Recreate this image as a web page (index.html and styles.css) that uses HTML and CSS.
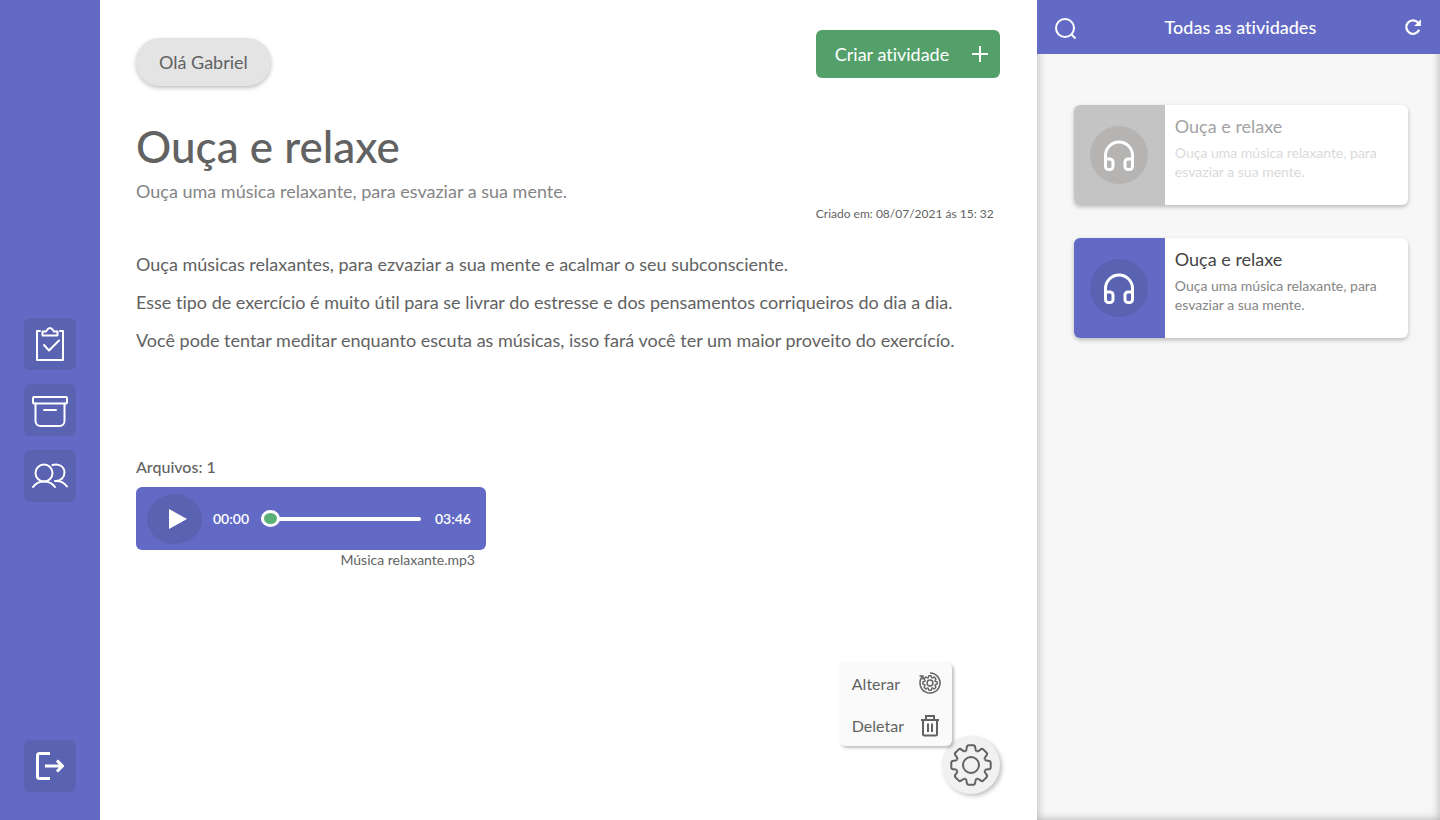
FILE: index.html
```html
<!DOCTYPE html>
<html lang="pt-BR">
<head>
<meta charset="utf-8">
<meta name="viewport" content="width=device-width, initial-scale=1">
<title>Todas as atividades</title>
<link rel="stylesheet" href="styles.css">
</head>
<body>
<svg class="defs" aria-hidden="true">
  <symbol id="gear" viewBox="-22 -22 44 44">
    <g id="gear-half">
      <path id="tooth" d="M-5.7-13.8C-4.7-14.2-4.4-15-4.3-17C-4.2-19-3.6-19.7-2.4-19.7H2.4C3.6-19.7 4.2-19 4.3-17C4.4-15 4.7-14.2 5.7-13.8"/>
      <use href="#tooth" transform="rotate(45)"/>
      <use href="#tooth" transform="rotate(90)"/>
      <use href="#tooth" transform="rotate(135)"/>
    </g>
    <use href="#gear-half" transform="rotate(180)"/>
    <circle r="8"/>
  </symbol>
  <symbol id="headphones" viewBox="0 0 32 32">
    <path d="M2.500 22V16.500a13.500 13.500 0 0 1 27 0V22M2.500 20H7a3 3 0 0 1 3 3v4.500a3 3 0 0 1-3 3H5.500a3 3 0 0 1-3-3ZM29.500 20H25a3 3 0 0 0-3 3v4.500a3 3 0 0 0 3 3h1.500a3 3 0 0 0 3-3Z"/>
  </symbol>
</svg>
<div class="app">
  <aside class="sidebar">
    <nav class="sidebar-nav" aria-label="Principal">
      <a class="nav-button" href="#atividades" aria-label="Atividades">
        <svg class="icon nav-icon" viewBox="0 0 36 36"><path d="M8 5H5v29h26V5h-3M10.500 5.500h3.500c1-.5 1-3.500 4-3.500s3 3 4 3.500h3.500V9.500h-15ZM12 19l5 5.500L27 14.500"/></svg>
      </a>
      <a class="nav-button" href="#arquivo" aria-label="Arquivo">
        <svg class="icon nav-icon" viewBox="0 0 36 36"><rect x="1" y="5" width="34" height="6.500" rx="1"/><path d="M3.500 11.500V29a5 5 0 0 0 5 5h19a5 5 0 0 0 5-5V11.500M12 18h12"/></svg>
      </a>
      <a class="nav-button" href="#pacientes" aria-label="Pacientes">
        <svg class="icon nav-icon" viewBox="0 0 36 36"><circle cx="12" cy="15" r="8.500"/><path d="M1 29c5-7.500 17-7.500 22 0M20.500 7c6-2 12 1.500 12 7.500 0 5-4 9-9.500 8.500M23 23c5-.5 9.500 2 12 5.500"/></svg>
      </a>
    </nav>
    <button class="nav-button logout" type="button" aria-label="Sair">
      <svg class="icon nav-icon logout-icon" viewBox="0 0 36 36"><path d="M18 5.500H7.500a2 2 0 0 0-2 2v21a2 2 0 0 0 2 2H18M13 18h17M25 12.500l5.500 5.500-5.500 5.500"/></svg>
    </button>
  </aside>

  <main class="content">
    <header class="content-top">
      <div class="greeting">Olá Gabriel</div>
      <button class="create" type="button">Criar atividade
        <svg class="icon create-icon" viewBox="0 0 16 16"><path d="M8 0v16M0 8h16"/></svg>
      </button>
    </header>
    <h1 class="title">Ouça e relaxe</h1>
    <p class="subtitle">Ouça uma música relaxante, para esvaziar a sua mente.</p>
    <div class="created-row"><p class="created">Criado em: 08/07/2021 ás 15: 32</p></div>
    <div class="description">
      <p>Ouça músicas relaxantes, para ezvaziar a sua mente e acalmar o seu subconsciente.</p>
      <p>Esse tipo de exercício é muito útil para se livrar do estresse e dos pensamentos corriqueiros do dia a dia.</p>
      <p>Você pode tentar meditar enquanto escuta as músicas, isso fará você ter um maior proveito do exercícío.</p>
    </div>
    <section class="files">
      <h2 class="files-title">Arquivos: 1</h2>
      <div class="player">
        <button class="play" type="button" aria-label="Reproduzir">
          <svg class="play-icon" viewBox="0 0 18 20"><path d="M0 0L18 10L0 20Z"/></svg>
        </button>
        <span class="time">00:00</span>
        <input class="seek" type="range" min="0" max="226" value="0" aria-label="Posição da música">
        <span class="time">03:46</span>
      </div>
      <p class="file-name">Música relaxante.mp3</p>
    </section>
    <div class="settings">
      <button class="settings-button" type="button" aria-label="Opções">
        <svg class="icon settings-icon"><use href="#gear"/></svg>
      </button>
      <div class="menu">
        <button class="menu-item" type="button">Alterar
          <svg class="icon menu-icon" viewBox="0 0 24 24"><path d="M12 2A10 10 0 1 1 4 6M1.500 5H5V8.500"/><svg class="small-gear" x="4" y="4" width="16" height="16"><use href="#gear"/></svg></svg>
        </button>
        <button class="menu-item" type="button">Deletar
          <svg class="icon menu-icon trash-icon" viewBox="0 0 24 24"><path d="M3 7h18M8 7V3h8v4M5 7v14a1.500 1.500 0 0 0 1.500 1.500h11A1.500 1.500 0 0 0 19 21V7M10 10.500v8.500M14 10.500v8.500"/></svg>
        </button>
      </div>
    </div>
  </main>

  <aside class="activities">
    <header class="activities-top">
      <button class="bar-button" type="button" aria-label="Pesquisar">
        <svg class="icon search-icon" viewBox="0 0 22 26"><circle cx="10" cy="14" r="9"/><path d="M16.500 20.500l4 4"/></svg>
      </button>
      <h2 class="activities-title">Todas as atividades</h2>
      <button class="bar-button refresh" type="button" aria-label="Atualizar">
        <svg class="icon refresh-icon" viewBox="0 0 16 16"><path d="M13.500 10.500A6 6 0 1 1 12.500 4"/><path class="refresh-tip" d="M15 1v6H9Z"/></svg>
      </button>
    </header>
    <ul class="cards">
      <li>
        <a class="card card-done" href="#atividade-1">
          <span class="card-side"><span class="card-disc"><svg class="icon card-icon"><use href="#headphones"/></svg></span></span>
          <span class="card-body">
            <span class="card-title">Ouça e relaxe</span>
            <span class="card-text">Ouça uma música relaxante, para esvaziar a sua mente.</span>
          </span>
        </a>
      </li>
      <li>
        <a class="card" href="#atividade-2">
          <span class="card-side"><span class="card-disc"><svg class="icon card-icon"><use href="#headphones"/></svg></span></span>
          <span class="card-body">
            <span class="card-title">Ouça e relaxe</span>
            <span class="card-text">Ouça uma música relaxante, para esvaziar a sua mente.</span>
          </span>
        </a>
      </li>
    </ul>
  </aside>
</div>
</body>
</html>
```
FILE: styles.css
```css
* { box-sizing: border-box; }
body, h1, h2, p, ul { margin: 0; padding: 0; }
body {
  font-family: Lato, "Open Sans", sans-serif;
  font-size: 18px;
  font-weight: 400;
  font-variant-ligatures: none;
  color: #626262;
  background: #fff;
}
button { font: inherit; font-variant-ligatures: none; color: inherit; border: 0; padding: 0; background: none; cursor: pointer; }
a { color: inherit; text-decoration: none; }
.defs { position: absolute; width: 0; height: 0; }
.icon { fill: none; stroke: currentColor; stroke-width: 2; flex: none; }

.app {
  display: grid;
  grid-template-columns: 100px minmax(0, 1fr) minmax(300px, 28%);
  min-height: 100vh;
}

/* Sidebar */
.sidebar {
  display: grid;
  grid-template-rows: 1fr auto 1fr;
  justify-items: center;
  background: #626ac5;
  color: #fff;
}
.sidebar-nav { grid-row: 2; display: grid; gap: 14px; }
.nav-button {
  display: flex;
  align-items: center;
  justify-content: center;
  width: 52px;
  height: 52px;
  border-radius: 6px;
  background: #5a62b2;
}
.nav-icon { width: 36px; height: 36px; stroke-linecap: round; stroke-linejoin: round; }
.logout { grid-row: 3; align-self: end; margin-bottom: 28px; }
.logout-icon { stroke-width: 3; stroke-linecap: butt; }

/* Activity detail */
.content { position: relative; padding: 30px 37px 120px 36px; }
.content-top { display: flex; justify-content: space-between; align-items: flex-start; }
.greeting {
  margin-top: 8px;
  padding: 0 23px;
  line-height: 48px;
  border-radius: 24px;
  background: #e4e4e4;
  box-shadow: 0 2px 4px rgba(0, 0, 0, .25);
}
.create {
  display: flex;
  align-items: center;
  justify-content: space-between;
  width: 184px;
  height: 48px;
  padding: 0 12px 0 19px;
  border-radius: 6px;
  background: #53a06a;
  color: #fff;
}
.create-icon { width: 16px; height: 16px; }
.title { margin-top: 32px; font-size: 44px; font-weight: 500; line-height: 56px; }
.subtitle { margin-top: 4px; line-height: 26px; color: #858585; }
.created-row { display: flex; justify-content: flex-end; }
.created { width: 184px; font-size: 12px; line-height: 20px; white-space: nowrap; }
.description { margin-top: 21px; line-height: 38px; }
.files { width: 350px; margin-top: 96px; }
.files-title { font-size: 16px; font-weight: 500; line-height: 24px; }
.player {
  display: flex;
  align-items: center;
  height: 63px;
  margin-top: 8px;
  padding: 0 15px 0 11px;
  border-radius: 6px;
  background: #626ac5;
  color: #fff;
}
.play {
  display: flex;
  align-items: center;
  justify-content: center;
  flex: none;
  width: 55px;
  height: 50px;
  margin-right: 11px;
  padding-left: 6px;
  border-radius: 50%;
  background: #5a62b2;
}
.play-icon { width: 18px; height: 20px; fill: #fff; }
.time { font-size: 14px; font-weight: 600; }
.seek {
  appearance: none;
  flex: 1;
  min-width: 0;
  height: 18px;
  margin: 0 14px 0 12px;
  background: none;
}
.seek::-webkit-slider-runnable-track { height: 4px; border-radius: 2px; background: #fff; }
.seek::-webkit-slider-thumb {
  appearance: none;
  width: 19px;
  height: 17px;
  margin-top: -7px;
  border: 3px solid #fff;
  border-radius: 50%;
  background: #5bb075;
}
.file-name { padding-right: 11px; font-size: 14px; line-height: 20px; text-align: right; }

/* Floating options */
.settings { position: absolute; right: 37px; bottom: 26px; }
.settings-button {
  display: flex;
  align-items: center;
  justify-content: center;
  width: 58px;
  height: 58px;
  border-radius: 50%;
  background: #f1f1f1;
  box-shadow: 2px 2px 4px rgba(0, 0, 0, .25);
}
.settings-icon { width: 44px; height: 44px; }
.menu {
  position: absolute;
  right: 48px;
  bottom: 48px;
  width: 113px;
  border-radius: 6px;
  background: #fafafa;
  box-shadow: 2px 2px 3px rgba(0, 0, 0, .25);
  font-size: 16px;
}
.menu-item {
  display: flex;
  align-items: center;
  justify-content: space-between;
  width: 100%;
  height: 42px;
  padding: 0 10px 0 13px;
}
.menu-icon { width: 24px; height: 24px; stroke-width: 1.5; }
.small-gear { stroke-width: 4; }
.trash-icon { stroke-width: 2; }

/* Activity list */
.activities { background: #f7f7f7; box-shadow: inset 0 0 10px rgba(0, 0, 0, .3); }
.activities-top {
  display: flex;
  align-items: center;
  justify-content: space-between;
  height: 54px;
  padding: 0 18px;
  background: #626ac5;
  color: #fff;
}
.activities-title { font-size: 18px; font-weight: 500; }
.bar-button { display: flex; }
.search-icon { width: 22px; height: 26px; }
.refresh-icon { width: 18px; height: 18px; }
.refresh-tip { fill: #fff; stroke: none; }
.cards { display: grid; gap: 33px; padding: 51px 32px 0 37px; list-style: none; }
.card {
  display: flex;
  min-height: 100px;
  border-radius: 6px;
  overflow: hidden;
  background: #fff;
  box-shadow: 0 2px 4px rgba(0, 0, 0, .25);
}
.card-side {
  display: flex;
  align-items: center;
  justify-content: center;
  flex: none;
  width: 91px;
  background: #626ac5;
  color: #fff;
}
.card-disc {
  display: flex;
  align-items: center;
  justify-content: center;
  width: 58px;
  height: 58px;
  border-radius: 50%;
  background: #5a62b2;
}
.card-icon { width: 32px; height: 32px; stroke-width: 3; }
.card-body { display: block; padding: 8px 10px; }
.card-title { display: block; line-height: 26px; color: #444; }
.card-text { display: block; margin-top: 4px; font-size: 14px; line-height: 19px; color: #858585; }
.card-done .card-side { background: #c4c4c4; }
.card-done .card-disc { background: #b5b4b3; }
.card-done .card-title { color: #a3a3a3; }
.card-done .card-text { color: #dadada; }
```
